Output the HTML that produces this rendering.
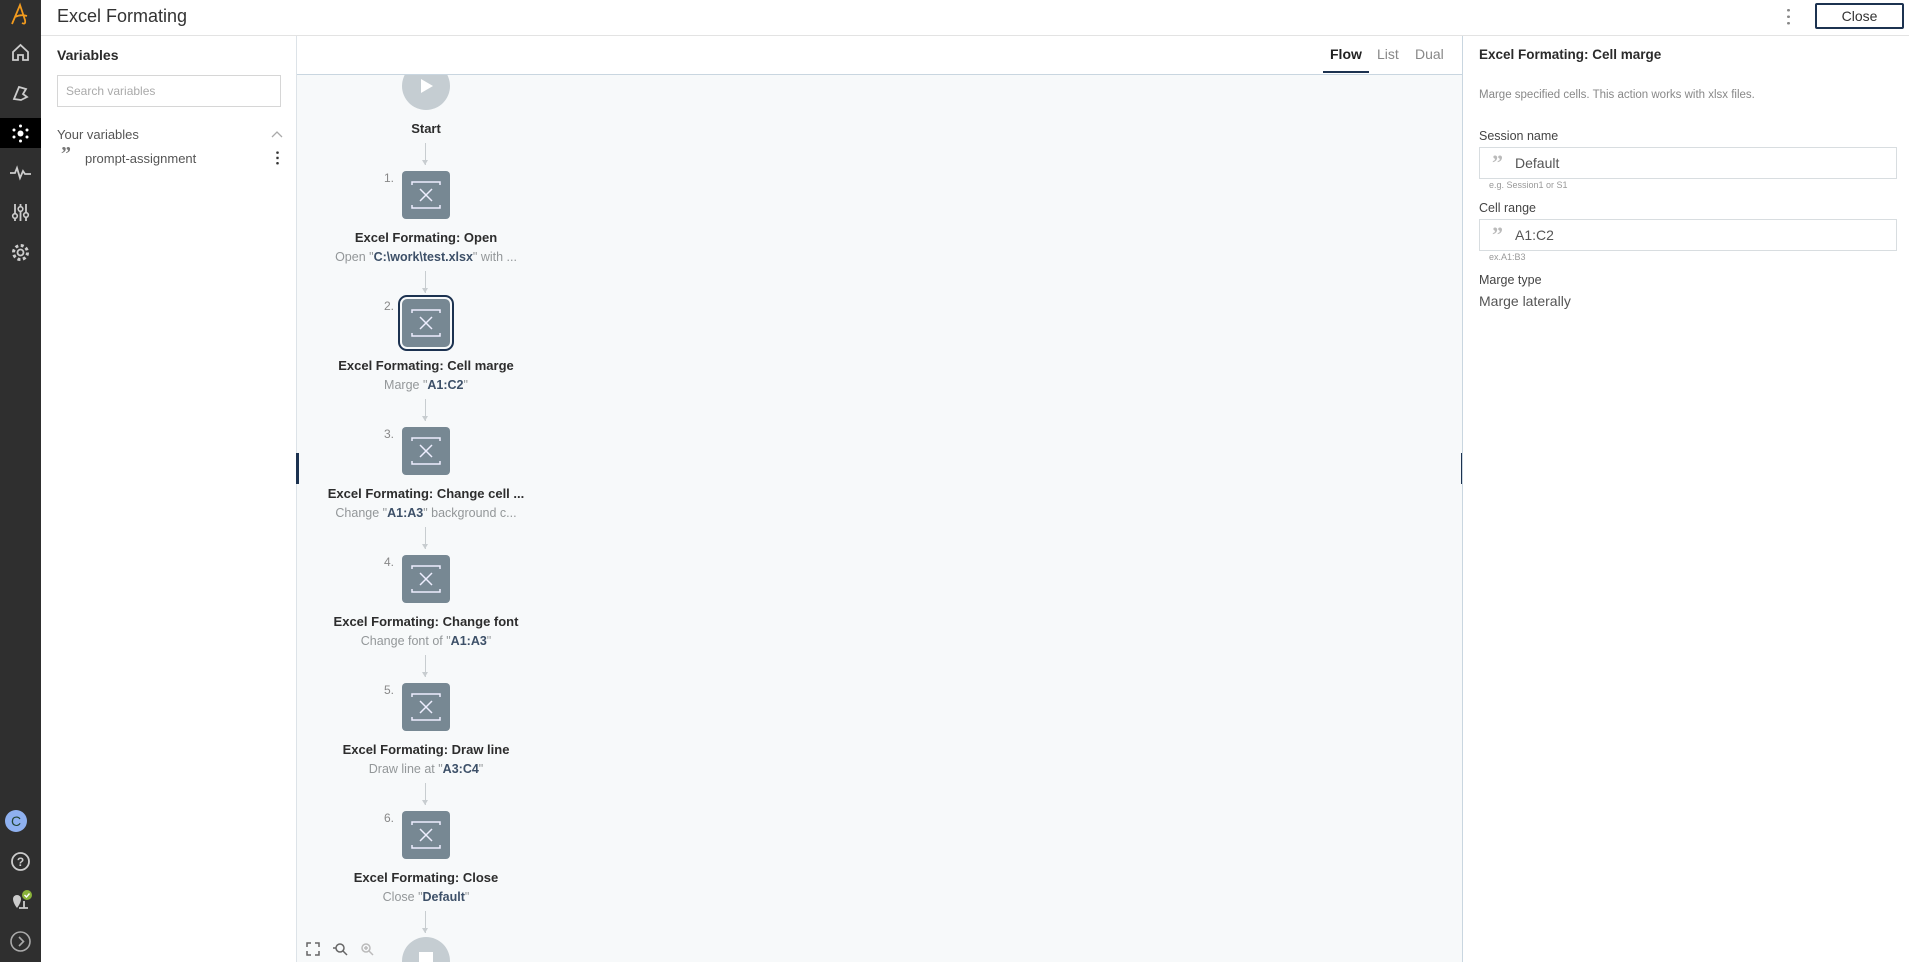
<!DOCTYPE html>
<html style="overflow:hidden;width:1909px;height:962px"><head><meta charset="utf-8"><style>
*{box-sizing:border-box;margin:0;padding:0}
body{width:1909px;height:962px;overflow:hidden;font-family:"Liberation Sans",sans-serif;background:#fff;position:relative;color:#2b2b2b}
.a{position:absolute}
#side{left:0;top:0;width:41px;height:962px;background:#2f2f2f}
.ic{position:absolute;left:8px;width:25px;height:25px}
#hdr{left:41px;top:0;right:0;height:36px;border-bottom:1px solid #e3e3e3;background:#fff}
#left{left:41px;top:36px;width:256px;height:926px;border-right:1px solid #dde3e8;background:#fff}
#canvas{left:297px;top:74px;width:1166px;height:888px;background:#f7f9fa;border-top:1px solid #c9d6e0;overflow:hidden}
#tabs{left:297px;top:36px;width:1166px;height:38px;background:#fff}
#right{left:1462px;top:36px;width:447px;height:926px;border-left:1px solid #c9d6e0;background:#fff}
.node{position:absolute;left:105px;width:48px;height:48px;background:#778893;border-radius:4px}
.node.sel{outline:2px solid #1c3250;outline-offset:2px;border-radius:5px}
.num{position:absolute;left:75px;width:22px;text-align:right;font-size:12px;color:#888}
.tt{position:absolute;left:-1px;width:260px;text-align:center;font-size:13px;font-weight:bold;color:#2d2d2d}
.st{position:absolute;left:-1px;width:260px;text-align:center;font-size:12.5px;color:#939799}
.st b{color:#3d5068}
.ar{position:absolute;left:128px;width:1px;background:#c8cdd0}
.ar:after{content:"";position:absolute;left:-3px;bottom:0;border-top:5px solid #c8cdd0;border-left:3.5px solid transparent;border-right:3.5px solid transparent}
.lbl{position:absolute;left:1479px;font-size:12.5px;color:#444}
.inp{position:absolute;left:1479px;width:418px;height:32px;border:1px solid #d8dde0;font-size:14px;color:#555;padding:7px 0 0 35px}
.q{position:absolute;left:12px;top:2px;font-size:22px;font-weight:bold;color:#bbb;font-family:"Liberation Serif",serif;letter-spacing:-2px}
.hint{position:absolute;left:1489px;font-size:9px;color:#999}
</style></head><body>
<div id="side" class="a">
<svg class="ic" style="top:2px" viewBox="0 0 25 25"><path d="M4 22 L12 3 L17 18 Q18 23 14 21 M7 15 Q13 12 19 14" fill="none" stroke="#f29b1e" stroke-width="1.8"/></svg>
<svg class="ic" style="top:40px" viewBox="0 0 25 25"><path d="M5 12 L12.5 5 L20 12 V20 H15 V15 H10 V20 H5 Z" fill="none" stroke="#ccc" stroke-width="1.8"/></svg>
<svg class="ic" style="top:80px" viewBox="0 0 25 25"><path d="M6 19 L11 7 L18 9 L15 14 L19 17 L13 20 Z" fill="none" stroke="#ccc" stroke-width="1.8"/></svg>
<div class="a" style="left:0;top:118px;width:41px;height:30px;background:#000"></div>
<svg class="ic" style="top:121px" viewBox="0 0 25 25" fill="#fff"><circle cx="12.5" cy="12.5" r="3"/><circle cx="12.5" cy="5" r="1.5"/><circle cx="12.5" cy="20" r="1.5"/><circle cx="6" cy="9" r="1.5"/><circle cx="19" cy="9" r="1.5"/><circle cx="6" cy="16" r="1.5"/><circle cx="19" cy="16" r="1.5"/></svg>
<svg class="ic" style="top:160px" viewBox="0 0 25 25"><path d="M2 13 H7 L9 8 L12 18 L15 11 L17 14 H23" fill="none" stroke="#ccc" stroke-width="1.8"/></svg>
<svg class="ic" style="top:200px" viewBox="0 0 25 25"><path d="M7 4V21M12.5 4V21M18 4V21" stroke="#ccc" stroke-width="1.8"/><circle cx="7" cy="16" r="2.3" fill="#2f2f2f" stroke="#ccc" stroke-width="1.6"/><circle cx="12.5" cy="9" r="2.3" fill="#2f2f2f" stroke="#ccc" stroke-width="1.6"/><circle cx="18" cy="15" r="2.3" fill="#2f2f2f" stroke="#ccc" stroke-width="1.6"/></svg>
<svg class="ic" style="top:240px" viewBox="0 0 25 25"><circle cx="12.5" cy="12.5" r="7" fill="none" stroke="#ccc" stroke-width="3" stroke-dasharray="3 2.5"/><circle cx="12.5" cy="12.5" r="3" fill="none" stroke="#ccc" stroke-width="1.8"/></svg>
<div class="a" style="left:5px;top:810px;width:22px;height:22px;border-radius:50%;background:#8fb1f0;color:#243;font-size:14px;text-align:center;line-height:22px">C</div>
<svg class="ic" style="top:849px" viewBox="0 0 25 25"><circle cx="12.5" cy="12.5" r="8.5" fill="none" stroke="#ccc" stroke-width="1.8"/><text x="12.5" y="17" text-anchor="middle" font-size="12" font-weight="bold" fill="#ccc" font-family="Liberation Sans">?</text></svg>
<svg class="ic" style="top:889px" viewBox="0 0 25 25"><path d="M5 10a4 4 0 1 1 8 0c0 4-4 9-4 9s-4-5-4-9z" fill="#ccc"/><path d="M11 19H20M16 12V19" stroke="#ccc" stroke-width="1.8"/><circle cx="19" cy="6" r="5" fill="#8ab33a"/><path d="M16.5 6l2 2 3-3.5" stroke="#fff" stroke-width="1.4" fill="none"/></svg>
<svg class="ic" style="top:929px" viewBox="0 0 25 25"><circle cx="12.5" cy="12.5" r="9.5" fill="none" stroke="#aaa" stroke-width="1.6"/><path d="M11 8l4.5 4.5L11 17" fill="none" stroke="#aaa" stroke-width="1.6"/></svg>
</div>
<div id="hdr" class="a"><div class="a" style="left:16px;top:6px;font-size:18px;color:#333">Excel Formating</div>
<div class="a" style="left:1746px;top:7px;width:3px;height:20px;background:radial-gradient(circle,#888 1.3px,transparent 1.5px) 0 0/3px 6.5px"></div>
<div class="a" style="left:1774px;top:3px;width:89px;height:26px;border:2px solid #1c3250;border-radius:2px;font-size:14px;text-align:center;line-height:22px;color:#333">Close</div></div>
<div id="left" class="a">
<div class="a" style="left:16px;top:11px;font-size:14px;font-weight:bold;color:#2b2b2b">Variables</div>
<div class="a" style="left:16px;top:39px;width:224px;height:32px;border:1px solid #d6d6d6;font-size:12px;color:#aaa;padding:8px 0 0 8px">Search variables</div>
<div class="a" style="left:16px;top:91px;font-size:13px;color:#555">Your variables</div>
<svg class="a" style="left:230px;top:94px" width="12" height="8"><path d="M1 7l5-5 5 5" fill="none" stroke="#aaa" stroke-width="1.3"/></svg>
<div class="a" style="left:20px;top:107px;font-size:20px;font-weight:bold;color:#777;font-family:'Liberation Serif',serif;letter-spacing:-2px">”</div>
<div class="a" style="left:44px;top:115px;font-size:13px;color:#555">prompt-assignment</div>
<div class="a" style="left:235px;top:114px;width:3px;height:16px;background:radial-gradient(circle,#333 1.2px,transparent 1.4px) 0 0/3px 5.3px"></div>
</div>
<div id="tabs" class="a">
<div class="a" style="left:1033px;top:10px;font-size:14px;font-weight:bold;color:#222">Flow</div>
<div class="a" style="left:1026px;top:35px;width:46px;height:2px;background:#1c3250"></div>
<div class="a" style="left:1080px;top:10px;font-size:14px;color:#888">List</div>
<div class="a" style="left:1118px;top:10px;font-size:14px;color:#888">Dual</div>
</div>
<div id="canvas" class="a">
<div class="a" style="left:105px;top:-13px;width:48px;height:48px;border-radius:50%;background:#c5cdd2"><div class="a" style="left:19px;top:17px;border-left:12px solid #fff;border-top:7px solid transparent;border-bottom:7px solid transparent"></div></div>
<div class="tt" style="top:46px">Start</div>
<div class="ar" style="top:68px;height:22px"></div>
<div class="num" style="top:96px">1.</div><div class="node" style="top:96px"></div>
<div class="tt" style="top:155px">Excel Formating: Open</div><div class="st" style="top:175px">Open "<b>C:\work\test.xlsx</b>" with ...</div>
<div class="ar" style="top:196px;height:22px"></div>
<div class="num" style="top:224px">2.</div><div class="node sel" style="top:224px"></div>
<div class="tt" style="top:283px">Excel Formating: Cell marge</div><div class="st" style="top:303px">Marge "<b>A1:C2</b>"</div>
<div class="ar" style="top:324px;height:22px"></div>
<div class="num" style="top:352px">3.</div><div class="node" style="top:352px"></div>
<div class="tt" style="top:411px">Excel Formating: Change cell ...</div><div class="st" style="top:431px">Change "<b>A1:A3</b>" background c...</div>
<div class="ar" style="top:452px;height:22px"></div>
<div class="num" style="top:480px">4.</div><div class="node" style="top:480px"></div>
<div class="tt" style="top:539px">Excel Formating: Change font</div><div class="st" style="top:559px">Change font of "<b>A1:A3</b>"</div>
<div class="ar" style="top:580px;height:22px"></div>
<div class="num" style="top:608px">5.</div><div class="node" style="top:608px"></div>
<div class="tt" style="top:667px">Excel Formating: Draw line</div><div class="st" style="top:687px">Draw line at "<b>A3:C4</b>"</div>
<div class="ar" style="top:708px;height:22px"></div>
<div class="num" style="top:736px">6.</div><div class="node" style="top:736px"></div>
<div class="tt" style="top:795px">Excel Formating: Close</div><div class="st" style="top:815px">Close "<b>Default</b>"</div>
<div class="ar" style="top:836px;height:22px"></div>
<div class="a" style="left:105px;top:862px;width:48px;height:48px;border-radius:50%;background:#c5cdd2"><div class="a" style="left:17px;top:15px;width:14px;height:14px;background:#fff"></div></div>
<svg class="a" style="left:9px;top:867px" width="75" height="14" fill="none" stroke="#666" stroke-width="1.5"><path d="M1 5V1H5M9 1H13V5M13 9V13H9M5 13H1V9"/><circle cx="34" cy="6" r="4"/><path d="M37 9l4 4M27 6h3"/><circle cx="60" cy="6" r="4" stroke="#bbb"/><path d="M63 9l4 4M58 6h4M60 4v4" stroke="#bbb"/></svg>
<svg width="0" height="0" style="position:absolute"><defs><g id="x"><path d="M10 14V11H38V14M10 34V37H38V34M18 18L30 30M30 18L18 30" fill="none" stroke="#eef" stroke-width="1.5"/></g></defs></svg>
<svg class="a" style="left:105px;top:96px" width="48" height="48"><use href="#x"/></svg>
<svg class="a" style="left:105px;top:224px" width="48" height="48"><use href="#x"/></svg>
<svg class="a" style="left:105px;top:352px" width="48" height="48"><use href="#x"/></svg>
<svg class="a" style="left:105px;top:480px" width="48" height="48"><use href="#x"/></svg>
<svg class="a" style="left:105px;top:608px" width="48" height="48"><use href="#x"/></svg>
<svg class="a" style="left:105px;top:736px" width="48" height="48"><use href="#x"/></svg>
</div>
<div class="a" style="left:296px;top:453px;width:3px;height:31px;background:#1c3250"></div>
<div class="a" style="left:1461px;top:453px;width:3px;height:31px;background:#1c3250"></div>

<div id="right" class="a"></div>
<div class="a" style="left:1479px;top:47px;font-size:13.5px;font-weight:bold;color:#2b2b2b">Excel Formating: Cell marge</div>
<div class="a" style="left:1479px;top:89px;font-size:11.5px;color:#888">Marge specified cells. This action works with xlsx files.</div>
<div class="lbl" style="top:129px">Session name</div>
<div class="inp" style="top:147px"><span class="q">”</span>Default</div>
<div class="hint" style="top:180px">e.g. Session1 or S1</div>
<div class="lbl" style="top:201px">Cell range</div>
<div class="inp" style="top:219px"><span class="q">”</span>A1:C2</div>
<div class="hint" style="top:252px">ex.A1:B3</div>
<div class="lbl" style="top:273px">Marge type</div>
<div class="a" style="left:1479px;top:293px;font-size:14px;color:#555">Marge laterally</div>
</body></html>
